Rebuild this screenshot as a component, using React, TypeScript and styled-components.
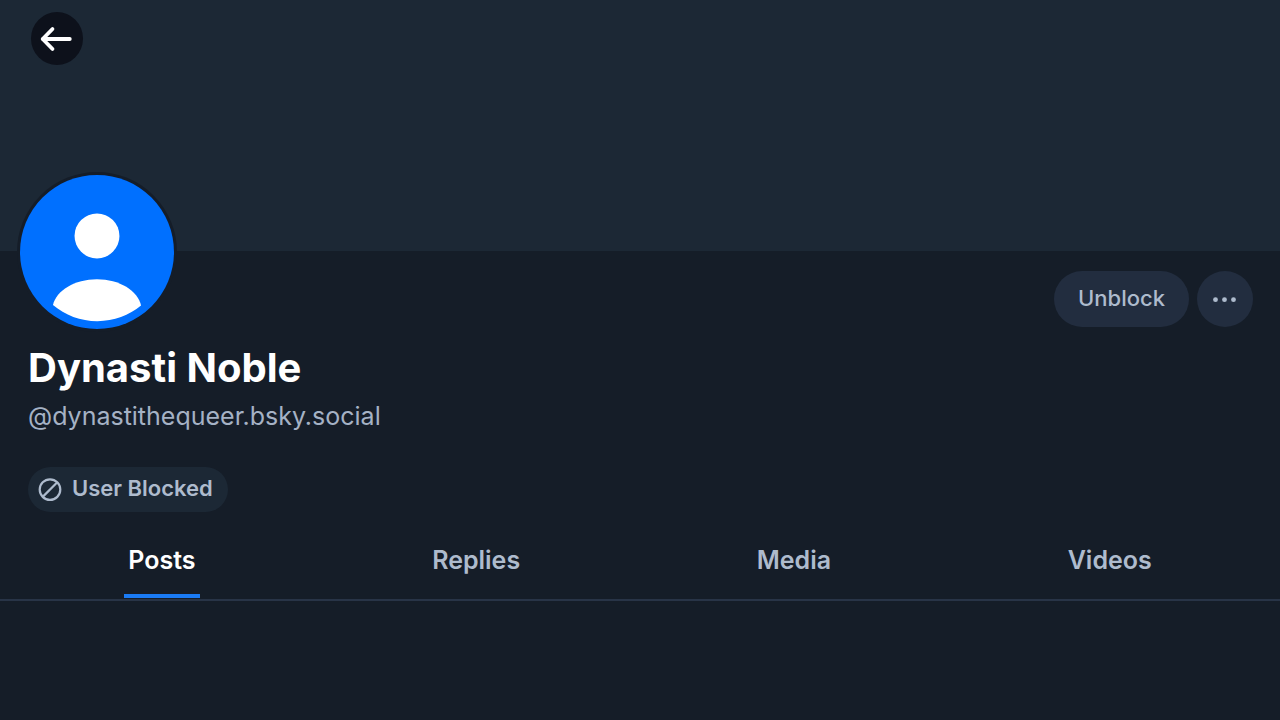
import React, { useState } from "react";
import styled, { createGlobalStyle } from "styled-components";

const colors = {
  background: "#151d28",
  raised: "#1c2835",
  button: "#222d3f",
  text: "#ffffff",
  muted: "#aebbcd",
  handle: "#a5b2c5",
  accent: "#1a7bf5",
  border: "#283447",
};

const GlobalStyle = createGlobalStyle`
  *, *::before, *::after { box-sizing: border-box; }
  body {
    margin: 0;
    background: ${colors.background};
    color: ${colors.text};
    font-family: Inter, "Liberation Sans", sans-serif;
  }
  button { font: inherit; border: 0; padding: 0; cursor: pointer; }
`;

const Page = styled.main`
  min-height: 100vh;
`;

const Banner = styled.div`
  height: 251px;
  padding: 12px 31px;
  background: ${colors.raised};
`;

const BackButton = styled.button`
  display: flex;
  align-items: center;
  justify-content: center;
  width: 52px;
  height: 53px;
  border-radius: 50%;
  background: #0d111b;
  color: ${colors.text};
`;

const Profile = styled.section`
  position: relative;
  padding: 20px 27px 0 28px;
`;

const Avatar = styled.div`
  position: absolute;
  top: -79px;
  left: 17px;
  width: 160px;
  height: 160px;
  border: 3px solid ${colors.background};
  border-radius: 50%;
  background: ${colors.background};

  svg { display: block; width: 100%; height: 100%; }
`;

const Actions = styled.div`
  display: flex;
  justify-content: flex-end;
  gap: 8px;
`;

const ActionButton = styled.button<{ $round?: boolean }>`
  display: flex;
  align-items: center;
  justify-content: center;
  height: 56px;
  ${({ $round }) => ($round ? "width: 56px;" : "padding: 0 24px 2px;")}
  border-radius: 28px;
  background: ${colors.button};
  color: ${colors.muted};
  font-size: 22px;
  font-weight: 500;
`;

const Name = styled.h1`
  margin: 17px 0 0;
  font-size: 40px;
  line-height: 48px;
  font-weight: 700;
`;

const Handle = styled.p`
  margin: 8px 0 0;
  color: ${colors.handle};
  font-size: 25px;
  line-height: 32px;
`;

const Badge = styled.div`
  display: inline-flex;
  align-items: center;
  gap: 10px;
  height: 45px;
  margin-top: 35px;
  padding: 0 15px 0 10px;
  border-radius: 23px;
  background: ${colors.raised};
  color: ${colors.muted};
  font-size: 22px;
  line-height: 28px;
  font-weight: 600;
`;

const BadgeText = styled.span`
  padding-bottom: 3px;
`;

const Tabs = styled.div`
  display: flex;
  margin-top: 12px;
  padding: 0 10px 1px;
  border-bottom: 2px solid ${colors.border};
`;

const Tab = styled.button`
  display: flex;
  flex: 1 1 auto;
  justify-content: center;
  background: transparent;
`;

const TabLabel = styled.span<{ $active: boolean }>`
  padding: 20px 4px 18px;
  border-bottom: 4px solid ${({ $active }) => ($active ? colors.accent : "transparent")};
  color: ${({ $active }) => ($active ? colors.text : colors.muted)};
  font-size: 25px;
  line-height: 32px;
  font-weight: 600;
`;

const tabNames = ["Posts", "Replies", "Media", "Videos"];

function ArrowIcon() {
  return (
    <svg width="34" height="26" viewBox="0 0 34 26" fill="none" stroke="currentColor" strokeWidth="3.8" strokeLinecap="round" strokeLinejoin="round" aria-hidden="true">
      <path d="M29.8 13H2.7M12.5 3 2.7 13l9.8 10" />
    </svg>
  );
}

function PersonIcon() {
  return (
    <svg viewBox="0 0 24 24" aria-hidden="true">
      <circle cx="12" cy="12" r="12" fill="#0070ff" />
      <circle cx="12" cy="9.5" r="3.5" fill="#fff" />
      <path
        fill="#fff"
        d="M12.058 22.784C9.422 22.784 7.007 21.836 5.137 20.262 5.667 17.988 8.534 16.25 11.99 16.25c3.504 0 6.401 1.786 6.874 4.107-1.854 1.517-4.224 2.427-6.806 2.427Z"
      />
    </svg>
  );
}

function DotsIcon() {
  return (
    <svg width="26" height="8" viewBox="0 0 26 8" fill="currentColor" aria-hidden="true">
      <circle cx="3.5" cy="4.7" r="2.4" />
      <circle cx="12.5" cy="4.7" r="2.4" />
      <circle cx="21.5" cy="4.7" r="2.4" />
    </svg>
  );
}

function BlockedIcon() {
  return (
    <svg width="24" height="24" viewBox="0 0 24 24" fill="none" stroke="currentColor" strokeWidth="2.2" aria-hidden="true">
      <circle cx="12" cy="11.6" r="10.3" />
      <path d="M4.7 18.9 19.3 4.3" />
    </svg>
  );
}

export default function App() {
  const [active, setActive] = useState("Posts");

  return (
    <Page>
      <GlobalStyle />
      <Banner>
        <BackButton type="button" aria-label="Back">
          <ArrowIcon />
        </BackButton>
      </Banner>
      <Profile>
        <Avatar>
          <PersonIcon />
        </Avatar>
        <Actions>
          <ActionButton type="button">Unblock</ActionButton>
          <ActionButton type="button" $round aria-label="More options">
            <DotsIcon />
          </ActionButton>
        </Actions>
        <Name>Dynasti Noble</Name>
        <Handle>@dynastithequeer.bsky.social</Handle>
        <Badge>
          <BlockedIcon />
          <BadgeText>User Blocked</BadgeText>
        </Badge>
      </Profile>
      <Tabs role="tablist">
        {tabNames.map((name) => (
          <Tab key={name} type="button" role="tab" aria-selected={active === name} onClick={() => setActive(name)}>
            <TabLabel $active={active === name}>{name}</TabLabel>
          </Tab>
        ))}
      </Tabs>
    </Page>
  );
}
